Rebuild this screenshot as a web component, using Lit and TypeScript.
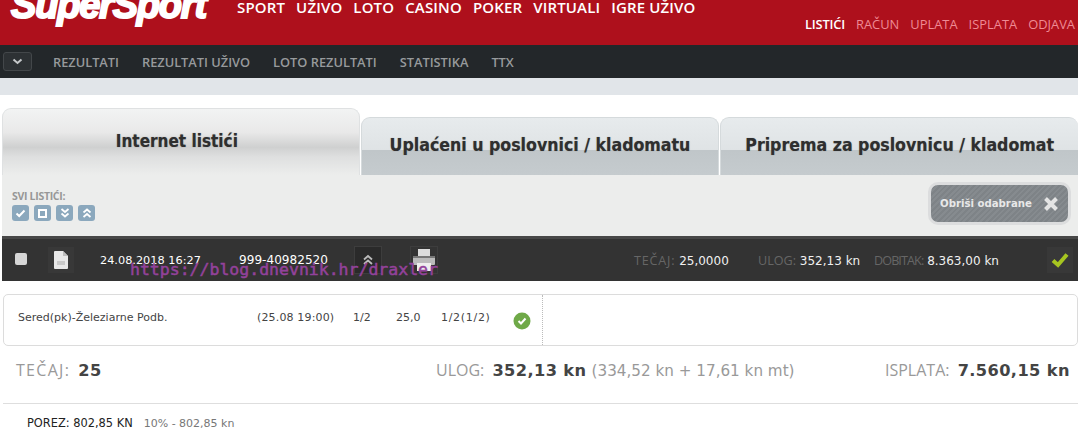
import { LitElement, html, css } from "lit";
import { customElement } from "lit/decorators.js";

@customElement("app-root")
export class AppRoot extends LitElement {
  static styles = css`
    :host { display: block; width: 1078px; height: 432px; overflow: hidden; background: #fff; position: relative; font-family: "DejaVu Sans", sans-serif; color: #333; }
    * { box-sizing: border-box; }
    .top { height: 45px; background: #ae101c; position: relative; display: flex; font-family: "Open Sans", sans-serif; overflow: hidden; }
    .logo { width: 237px; padding: 0 0 0 11px; margin-top: -13px; font: italic 700 38px/36px "Liberation Sans", sans-serif; color: #fff; -webkit-text-stroke: 2px #fff; letter-spacing: -1.2px; height: 36px; white-space: nowrap; }
    .main { display: flex; gap: 11px; font-size: 15px; font-weight: 600; color: #fff; line-height: 14px; letter-spacing: .15px; white-space: nowrap; }
    .acct { position: absolute; right: 3px; top: 16px; display: flex; gap: 11px; font-size: 12.9px; line-height: 16px; color: #ef8a94; }
    .acct .on { color: #fff; font-weight: 600; letter-spacing: -.2px; }
    .sub { height: 33px; background: #23272a; display: flex; align-items: center; padding-left: 3px; font: 600 12.8px "Open Sans", sans-serif; color: #979a9c; }
    .drop { width: 29px; height: 19px; border: 1px solid #43474a; border-radius: 3px; margin-right: 21px; display: flex; align-items: center; justify-content: center; background: #2d3134; }
    .sub span { margin-right: 23px; }
    .band { height: 17px; background: #e1e5e9; }
    .tabs { margin-top: 13px; height: 67px; display: flex; align-items: flex-end; padding-left: 2px; position: relative; }
    .tab { height: 58px; border-radius: 9px 9px 0 0; border: 1px solid #d5dadc; border-bottom: 0; background: linear-gradient(#e7ebed 0, #dfe3e5 57%, #c0c6c9 57%, #c5cbce 100%); font: 700 17.6px/55px "DejaVu Sans Condensed", "DejaVu Sans", sans-serif; color: #2f2f2f; text-align: center; white-space: nowrap; text-shadow: 0 0 1px rgba(60,60,60,.5); }
    .tab.t2 { width: 359px; margin-left: 1px; }
    .tab.t3 { width: 358px; margin-left: 1px; border-right: 0; }
    .tab.act { width: 358px; height: 67px; line-height: 65px; font-size: 17px; padding-right: 8px; border-color: #dfe1e2; background: linear-gradient(#f2f3f3 0, #e9e9e9 35%, #cfd0d0 58%, #dedfdf 72%, #ecedec 100%); }
    .panel { height: 61px; margin-left: 2px; background: #ecedec; display: flex; justify-content: space-between; }
    .all { padding: 15px 0 0 10px; font: 700 10.5px/13px "Open Sans", sans-serif; color: #979797; letter-spacing: -.3px; }
    .mini { display: flex; gap: 5px; margin-top: 2px; }
    .mini i { width: 17px; height: 16px; background: #8ba8bd; border-radius: 3px; display: flex; align-items: center; justify-content: center; }
    .del { width: 143px; height: 43px; margin: 7px 7px 0 0; border: 3px solid #dcddde; border-radius: 10px; background: repeating-linear-gradient(135deg, #868b8f 0 2px, #7e8387 2px 4px); display: flex; align-items: center; gap: 11px; padding-left: 9px; font: 700 11.3px "DejaVu Sans Condensed", sans-serif; color: #e8e8e8; white-space: nowrap; }
    .bar { height: 45px; margin-left: 2px; background: #333; border-top: 3px solid #484848; display: flex; align-items: center; font: 12px "DejaVu Sans", sans-serif; color: #f0f0f0; white-space: nowrap; position: relative; }
    .cb { width: 12px; height: 12px; background: #d6d6d6; border-radius: 2px; margin: 0 0 2px 13px; }
    .doc { margin-left: 21px; width: 26px; height: 26px; background: #383838; display: flex; align-items: center; justify-content: center; }
    .date { margin-left: 26px; width: 139px; font-size: 11.3px; color: #fff; }
    .num { width: 115px; font-size: 12.1px; color: #fff; }
    .ib { width: 28px; height: 28px; background: #2a2a2a; border: 1px solid #3d3d3d; display: flex; align-items: center; justify-content: center; }
    .ib.pr { margin-left: 28px; background: #333; }
    .stats { margin-left: auto; display: flex; color: #f0f0f0; font-size: 12px; }
    .stats b { font-weight: 400; color: #666; font-family: "Open Sans", sans-serif; font-size: 12.6px; }
    .stats b.lt1 { letter-spacing: .8px; }
    .stats b.lt3 { letter-spacing: -.9px; }
    .s1 { width: 124px; } .s2 { width: 116px; } .s3 { width: 127px; }
    .ok { width: 26px; height: 26px; background: #383838; margin: 0 5px 0 46px; display: flex; align-items: center; justify-content: center; }
    .wm { position: absolute; left: 130px; top: 260px; font: 16.5px/20px "DejaVu Sans Mono", monospace; color: #93429b; -webkit-text-stroke: .5px #93429b; white-space: nowrap; }
    .card { margin: 13px 0 0 3px; height: 52px; border: 1px solid #dcdcdc; border-radius: 5px; display: flex; font-size: 11px; color: #444; line-height: 16px; white-space: nowrap; padding-left: 14px; }
    .card > div { display: flex; align-items: center; height: 50px; padding-bottom: 5px; }
    .c1 { width: 239px; } .c2 { width: 96px; letter-spacing: .15px; } .c3 { width: 43px; } .c4 { width: 45px; } .c5 { width: 72px; letter-spacing: .7px; }
    .c6 { width: 29px; padding: 1px 0 0 !important; }
    .card .dot { border-left: 1px dotted #bbb; height: 50px; width: 1px; padding: 0; }
    .tot { height: 58px; margin-left: 3px; border-bottom: 1px solid #dedede; display: flex; padding: 13px 8px 0 13px; font-size: 16.2px; line-height: 22px; color: #999; white-space: nowrap; }
    .tot b { color: #444; font-weight: 700; font-size: 16.2px; letter-spacing: .4px; margin-left: 3px; }
    .tot .l { font-family: "Open Sans", sans-serif; font-size: 16px; }
    .tot .wide { letter-spacing: 1.3px; }
    .tot .g { font-size: 15.2px; }
    .a { width: 420px; }
    .b { width: 449px; }
    .por { padding: 11px 0 0 27px; font-size: 11.4px; line-height: 16px; color: #222; white-space: nowrap; }
    .por span { color: #777; margin-left: 11px; font-size: 11px; }
  `;

  render() {
    return html`
      <div class="top">
        <div class="logo">SuperSport</div>
        <div class="main">
          <span>SPORT</span><span>UŽIVO</span><span>LOTO</span><span>CASINO</span><span>POKER</span><span>VIRTUALI</span><span>IGRE UŽIVO</span>
        </div>
        <div class="acct"><span class="on">LISTIĆI</span><span>RAČUN</span><span>UPLATA</span><span>ISPLATA</span><span>ODJAVA</span></div>
      </div>
      <div class="sub">
        <div class="drop"><svg width="11" height="7" viewBox="0 0 11 7"><path d="M1.5 1.5 5.5 5 9.5 1.5" fill="none" stroke="#c5c8ca" stroke-width="2"/></svg></div>
        <span>REZULTATI</span><span>REZULTATI UŽIVO</span><span>LOTO REZULTATI</span><span>STATISTIKA</span><span>TTX</span>
      </div>
      <div class="band"></div>
      <div class="tabs">
        <div class="tab act">Internet listići</div>
        <div class="tab t2">Uplaćeni u poslovnici / kladomatu</div>
        <div class="tab t3">Priprema za poslovnicu / kladomat</div>
      </div>
      <div class="panel">
        <div class="all">SVI LISTIĆI:
          <div class="mini">
            <i><svg width="11" height="9" viewBox="0 0 11 9"><path d="M1.5 4.5 4.2 7 9.5 1.5" fill="none" stroke="#fff" stroke-width="2"/></svg></i>
            <i><svg width="9" height="9" viewBox="0 0 9 9"><rect x="1" y="1" width="7" height="7" fill="none" stroke="#fff" stroke-width="2"/></svg></i>
            <i><svg width="10" height="10" viewBox="0 0 10 10"><path d="M1.5 1 5 4 8.5 1M1.5 5.5 5 8.5 8.5 5.5" fill="none" stroke="#fff" stroke-width="1.8"/></svg></i>
            <i><svg width="10" height="10" viewBox="0 0 10 10"><path d="M1.5 4.5 5 1.500 8.5 4.5M1.5 9 5 6 8.5 9" fill="none" stroke="#fff" stroke-width="1.8"/></svg></i>
          </div>
        </div>
        <div class="del">Obriši odabrane
          <svg width="16" height="16" viewBox="0 0 16 16"><path d="M2.500 2.500 13.500 13.500M13.500 2.500 2.500 13.500" stroke="#e4e4e4" stroke-width="4"/></svg>
        </div>
      </div>
      <div class="bar">
        <div class="cb"></div>
        <div class="doc"><svg width="14" height="18" viewBox="0 0 14 18"><path d="M0 1Q0 0 1 0H9L14 5V17Q14 18 13 18H1Q0 18 0 17Z" fill="#e8e8e8"/><path d="M9 0V5H14Z" fill="#bdbdbd"/><rect x="3" y="10" width="8" height="4" fill="#c9c9c9"/></svg></div>
        <div class="date">24.08.2018 16:27</div>
        <div class="num">999-40982520</div>
        <div class="ib"><svg width="12" height="12" viewBox="0 0 12 12"><path d="M2 5.500 6 2 10 5.500M2 10 6 6.500 10 10" fill="none" stroke="#bbb" stroke-width="1.800"/></svg></div>
        <div class="ib pr"><svg width="24" height="24" viewBox="0 0 24 24"><rect x="6" y="1" width="12" height="7" fill="#ddd"/><rect x="1" y="8" width="22" height="9" rx="1" fill="#bbb"/><rect x="1" y="8" width="22" height="2" fill="#777"/><rect x="5" y="15" width="14" height="8" fill="#eee"/></svg></div>
        <div class="stats">
          <span class="s1"><b class="lt1">TEČAJ:</b> 25,0000</span>
          <span class="s2"><b>ULOG:</b> 352,13 kn</span>
          <span class="s3"><b class="lt3">DOBITAK:</b> 8.363,00 kn</span>
        </div>
        <div class="ok"><svg width="20" height="18" viewBox="0 0 20 18"><path d="M3 9.500 8 14 17 3.500" fill="none" stroke="#a6c520" stroke-width="4"/></svg></div>
      </div>
      <div class="wm">https://blog.dnevnik.hr/draxler</div>
      <div class="card">
        <div class="c1">Sered(pk)-Železiarne Podb.</div>
        <div class="c2">(25.08 19:00)</div>
        <div class="c3">1/2</div>
        <div class="c4">25,0</div>
        <div class="c5">1/2(1/2)</div>
        <div class="c6"><svg width="18" height="18" viewBox="0 0 18 18"><circle cx="9" cy="9" r="8.500" fill="#6fa948"/><path d="M5.500 9 8 11.500 12.500 6.500" fill="none" stroke="#fff" stroke-width="2"/></svg></div>
        <div class="dot"></div>
      </div>
      <div class="tot">
        <div class="a"><span class="l wide">TEČAJ:</span> <b>25</b></div>
        <div class="b"><span class="l">ULOG:</span> <b>352,13 kn</b> <span class="g">(334,52 kn + 17,61 kn mt)</span></div>
        <div><span class="l">ISPLATA:</span> <b>7.560,15 kn</b></div>
      </div>
      <div class="por">POREZ: 802,85 KN<span>10% - 802,85 kn</span></div>
    `;
  }
}
